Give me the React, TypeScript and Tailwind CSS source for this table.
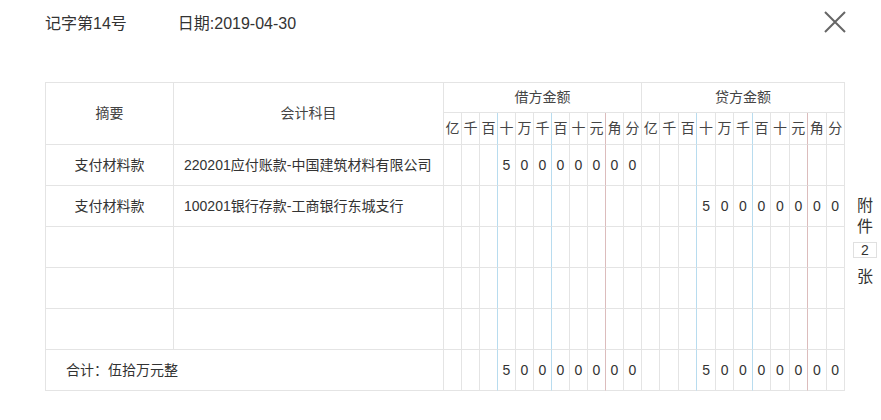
const units = ["亿", "千", "百", "十", "万", "千", "百", "十", "元", "角", "分"];

const rows = [
  { summary: "支付材料款", account: "220201应付账款-中国建筑材料有限公司", debit: "50000000", credit: "" },
  { summary: "支付材料款", account: "100201银行存款-工商银行东城支行", debit: "", credit: "50000000" },
  { summary: "", account: "", debit: "", credit: "" },
  { summary: "", account: "", debit: "", credit: "" },
  { summary: "", account: "", debit: "", credit: "" },
];

// vertical separators: blue every three places, red before 角
function lineColor(i: number) {
  if (i === 2 || i === 5) return "border-r-[#b8dcef]";
  if (i === 8) return "border-r-[#dcbcbc]";
  return "border-r-[#e4e4e4]";
}

function toCells(amount: string) {
  const padded = amount ? amount.padStart(11, " ") : "           ";
  return padded.split("").map((c) => (c === " " ? "" : c));
}

function DigitCells({ amount }: { amount: string }) {
  return (
    <>
      {toCells(amount).map((d, i) => (
        <div
          key={i}
          className={`flex items-center justify-center border-b border-r border-b-[#e4e4e4] ${lineColor(i)}`}
        >
          {d}
        </div>
      ))}
    </>
  );
}

export default function App() {
  return (
    <div
      className="w-[881px] h-[420px] bg-white text-[#333] overflow-hidden"
      style={{ fontFamily: '"Liberation Sans", "Noto Sans CJK SC", sans-serif' }}
    >
      {/* Header */}
      <div className="flex items-center h-[48px] pl-[45px] pr-[35px] text-[16px] text-[#333]">
        <span>记字第14号</span>
        <span className="ml-[51px]">日期:2019-04-30</span>
        <button className="ml-auto self-start mt-[11px]">
          <svg width="22" height="22" viewBox="0 0 22 22" fill="none" stroke="#666" strokeWidth="2">
            <path d="M1 1L21 21M21 1L1 21" />
          </svg>
        </button>
      </div>

      <div className="flex mt-[34px] pl-[45px]">
        {/* Voucher table */}
        <div className="w-[800px] grid grid-cols-[128px_270px_repeat(11,18px)_repeat(11,minmax(0,1fr))] grid-rows-[30px_32px_repeat(6,41px)] border-l border-t border-[#e4e4e4] text-[14px]">
          <div className="row-span-2 flex items-center justify-center border-b border-r border-[#e4e4e4] text-[#444]">
            摘要
          </div>
          <div className="row-span-2 flex items-center justify-center border-b border-r border-[#e4e4e4] text-[#444]">
            会计科目
          </div>
          <div className="col-span-11 flex items-center justify-center border-b border-r border-[#e4e4e4] text-[#444]">
            借方金额
          </div>
          <div className="col-span-11 flex items-center justify-center border-b border-r border-[#e4e4e4] text-[#444]">
            贷方金额
          </div>
          {units.map((u, i) => (
            <div
              key={"d" + i}
              className={`flex items-center justify-center border-b border-r border-b-[#e4e4e4] text-[#444] ${lineColor(i)}`}
            >
              {u}
            </div>
          ))}
          {units.map((u, i) => (
            <div
              key={"c" + i}
              className={`flex items-center justify-center border-b border-r border-b-[#e4e4e4] text-[#444] ${lineColor(i)}`}
            >
              {u}
            </div>
          ))}

          {rows.map((r, idx) => (
            <div key={idx} className="contents">
              <div className="flex items-center justify-center border-b border-r border-[#e4e4e4]">
                {r.summary}
              </div>
              <div className="flex items-center pl-[10px] border-b border-r border-[#e4e4e4] whitespace-nowrap">
                {r.account}
              </div>
              <DigitCells amount={r.debit} />
              <DigitCells amount={r.credit} />
            </div>
          ))}

          {/* Totals */}
          <div className="col-span-2 flex items-center pl-[20px] border-b border-r border-[#e4e4e4]">
            合计：伍拾万元整
          </div>
          <DigitCells amount="50000000" />
          <DigitCells amount="50000000" />
        </div>

        {/* Attachments */}
        <div className="ml-[8px] w-[24px] pt-[113px] flex flex-col items-center text-[16px] leading-[21px] text-[#333]">
          <span>附</span>
          <span>件</span>
          <span className="mt-[5px] w-[24px] h-[16px] border border-[#e0e0e0] flex items-center justify-center text-[14px] leading-none">
            2
          </span>
          <span className="mt-[8px]">张</span>
        </div>
      </div>
    </div>
  );
}
